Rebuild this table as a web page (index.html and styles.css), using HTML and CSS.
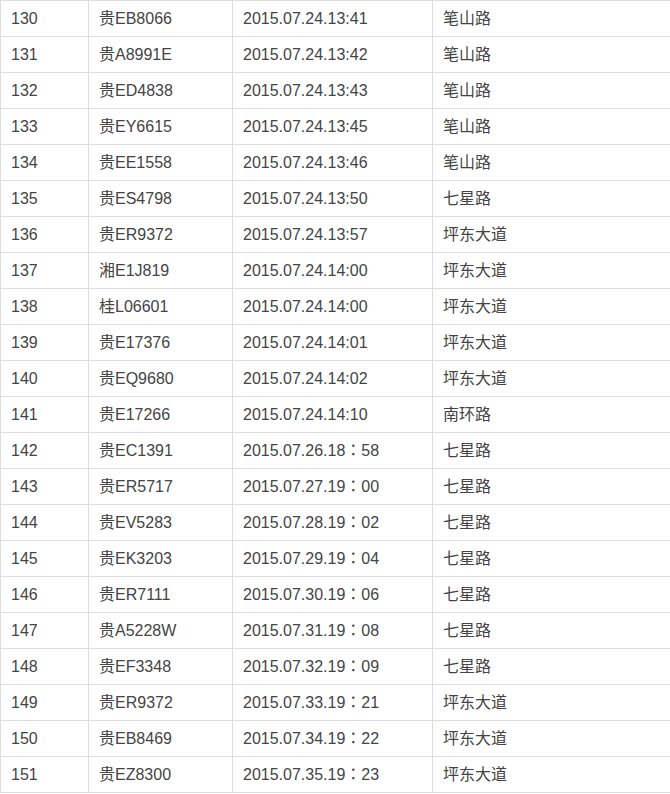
FILE: index.html
```html
<!DOCTYPE html>
<html lang="zh-CN">
<head>
<meta charset="utf-8">
<title>车辆记录</title>
<link rel="stylesheet" href="styles.css">
</head>
<body>
<table class="records">
<tbody>
<tr><td>130</td><td>贵EB8066</td><td class="time">2015.07.24.13:41</td><td>笔山路</td></tr>
<tr><td>131</td><td>贵A8991E</td><td class="time">2015.07.24.13:42</td><td>笔山路</td></tr>
<tr><td>132</td><td>贵ED4838</td><td class="time">2015.07.24.13:43</td><td>笔山路</td></tr>
<tr><td>133</td><td>贵EY6615</td><td class="time">2015.07.24.13:45</td><td>笔山路</td></tr>
<tr><td>134</td><td>贵EE1558</td><td class="time">2015.07.24.13:46</td><td>笔山路</td></tr>
<tr><td>135</td><td>贵ES4798</td><td class="time">2015.07.24.13:50</td><td>七星路</td></tr>
<tr><td>136</td><td>贵ER9372</td><td class="time">2015.07.24.13:57</td><td>坪东大道</td></tr>
<tr><td>137</td><td>湘E1J819</td><td class="time">2015.07.24.14:00</td><td>坪东大道</td></tr>
<tr><td>138</td><td>桂L06601</td><td class="time">2015.07.24.14:00</td><td>坪东大道</td></tr>
<tr><td>139</td><td>贵E17376</td><td class="time">2015.07.24.14:01</td><td>坪东大道</td></tr>
<tr><td>140</td><td>贵EQ9680</td><td class="time">2015.07.24.14:02</td><td>坪东大道</td></tr>
<tr><td>141</td><td>贵E17266</td><td class="time">2015.07.24.14:10</td><td>南环路</td></tr>
<tr><td>142</td><td>贵EC1391</td><td class="time">2015.07.26.18：58</td><td>七星路</td></tr>
<tr><td>143</td><td>贵ER5717</td><td class="time">2015.07.27.19：00</td><td>七星路</td></tr>
<tr><td>144</td><td>贵EV5283</td><td class="time">2015.07.28.19：02</td><td>七星路</td></tr>
<tr><td>145</td><td>贵EK3203</td><td class="time">2015.07.29.19：04</td><td>七星路</td></tr>
<tr><td>146</td><td>贵ER7111</td><td class="time">2015.07.30.19：06</td><td>七星路</td></tr>
<tr><td>147</td><td>贵A5228W</td><td class="time">2015.07.31.19：08</td><td>七星路</td></tr>
<tr><td>148</td><td>贵EF3348</td><td class="time">2015.07.32.19：09</td><td>七星路</td></tr>
<tr><td>149</td><td>贵ER9372</td><td class="time">2015.07.33.19：21</td><td>坪东大道</td></tr>
<tr><td>150</td><td>贵EB8469</td><td class="time">2015.07.34.19：22</td><td>坪东大道</td></tr>
<tr><td>151</td><td>贵EZ8300</td><td class="time">2015.07.35.19：23</td><td>坪东大道</td></tr>
</tbody>
</table>
</body>
</html>
```

FILE: styles.css
```css
html, body {
  margin: 0;
  padding: 0;
  background: #fff;
  overflow: hidden;
}

.records {
  border-collapse: separate;
  border-spacing: 0;
  table-layout: fixed;
  width: 671px;
  font-family: "Liberation Sans", Arial, "Noto Sans CJK SC", sans-serif;
  font-size: 16px;
  color: #444;
}

.records td {
  box-sizing: border-box;
  padding: 8px 10px;
  line-height: 19px;
  border-right: 1px solid #dddddd;
  border-bottom: 1px solid #dddddd;
  white-space: nowrap;
  overflow: hidden;
  text-align: left;
  vertical-align: middle;
}

.records td.time {
  font-family: "Liberation Sans", Arial, "Noto Sans CJK TC", sans-serif;
}

.records tr:first-child td {
  border-top: 1px solid #dddddd;
}

.records td:nth-child(1) {
  width: 89px;
  border-left: 1px solid #dddddd;
}

.records td:nth-child(2) {
  width: 144px;
}

.records td:nth-child(3) {
  width: 200px;
}

.records td:nth-child(4) {
  width: 238px;
}
```
